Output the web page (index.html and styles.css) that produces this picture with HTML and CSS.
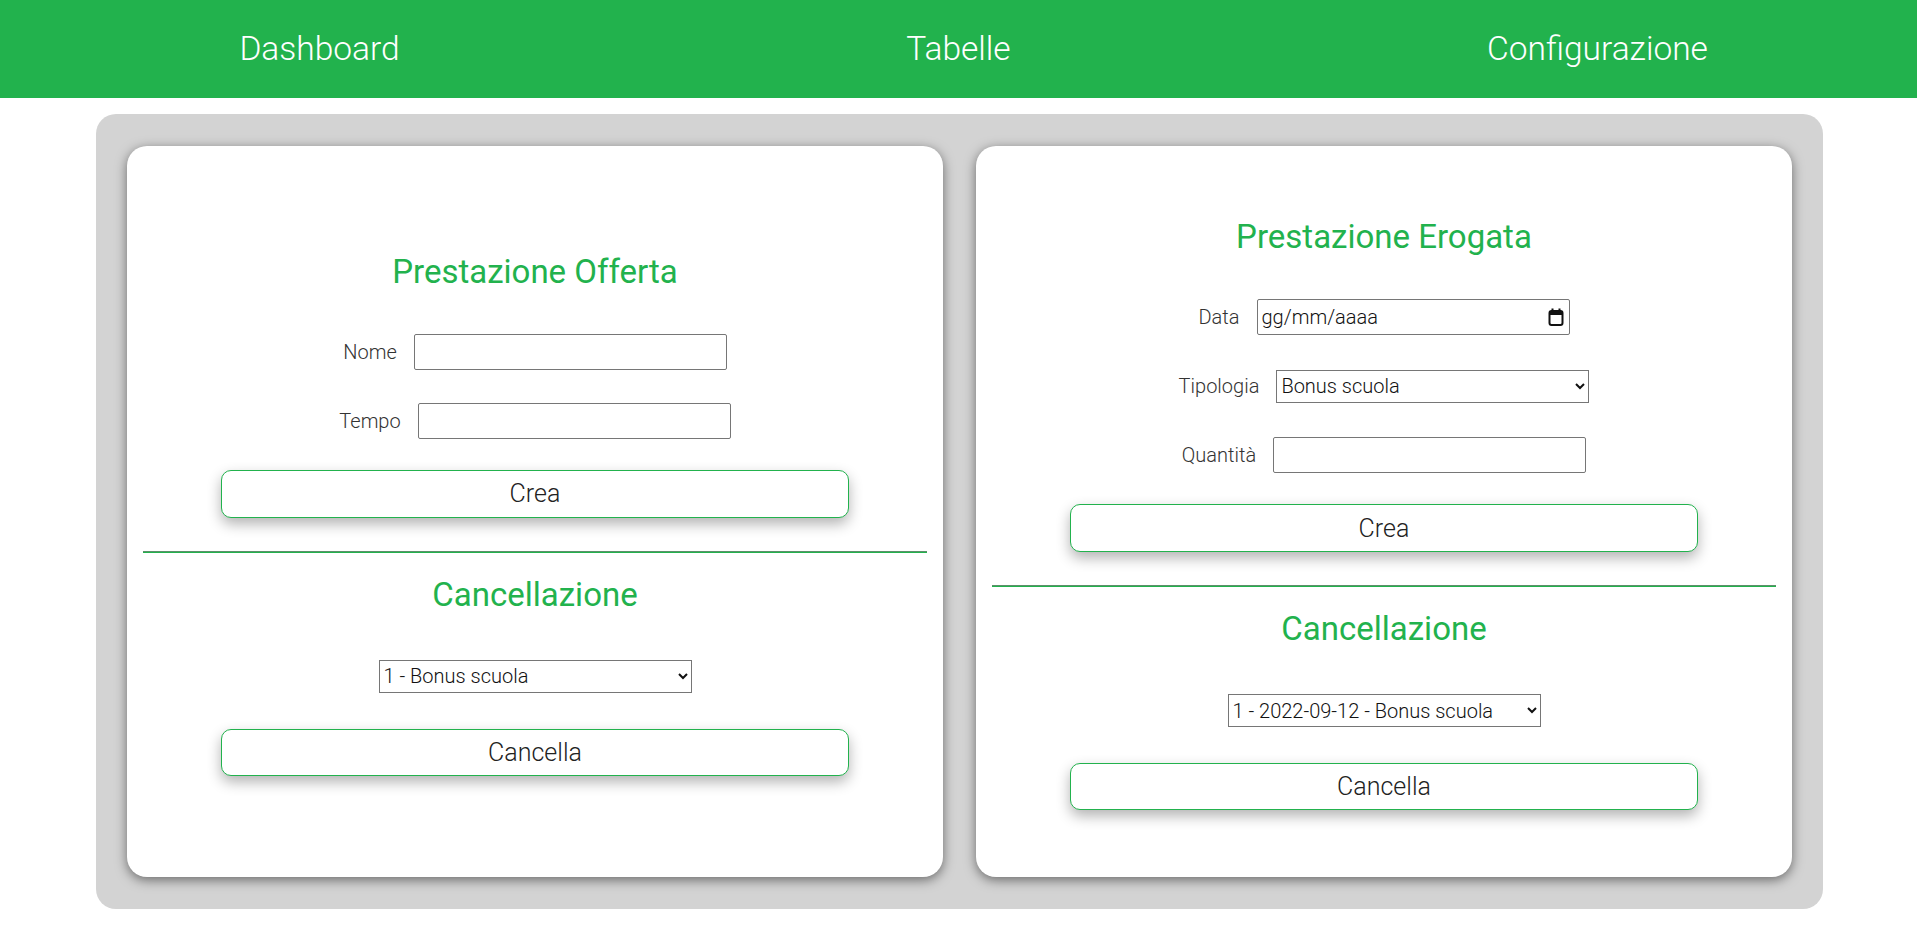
FILE: index.html
```html
<!DOCTYPE html>
<html lang="it">
<head>
<meta charset="utf-8">
<title>Prestazioni</title>
<link rel="stylesheet" href="styles.css">
</head>
<body>
<header class="topbar">
  <nav class="nav">
    <a class="nav-link" href="#">Dashboard</a>
    <a class="nav-link" href="#">Tabelle</a>
    <a class="nav-link" href="#">Configurazione</a>
  </nav>
</header>
<main class="panel">
  <section class="card">
    <div class="card-body">
      <h2 class="card-title">Prestazione Offerta</h2>
      <div class="field first-field">
        <label class="field-label">Nome</label>
        <input class="field-input" type="text">
      </div>
      <div class="field">
        <label class="field-label">Tempo</label>
        <input class="field-input" type="text">
      </div>
      <button class="btn">Crea</button>
      <hr class="divider">
      <h2 class="card-title">Cancellazione</h2>
      <select class="field-select delete-select"><option>1 - Bonus scuola</option></select>
      <button class="btn btn-delete">Cancella</button>
    </div>
  </section>
  <section class="card">
    <div class="card-body">
      <h2 class="card-title">Prestazione Erogata</h2>
      <div class="field first-field">
        <label class="field-label">Data</label>
        <div class="field-input date-input">
          <span class="date-text">gg/mm/aaaa</span>
          <svg class="cal-icon" width="16" height="18" viewBox="0 0 16 18" aria-hidden="true">
            <path d="M4.5 0.5v3M11.5 0.5v3" stroke="#111" stroke-width="2" fill="none"/>
            <rect x="1.5" y="3" width="13" height="14" rx="2" fill="none" stroke="#111" stroke-width="2"/>
            <rect x="1.5" y="3" width="13" height="4" fill="#111"/>
          </svg>
        </div>
      </div>
      <div class="field">
        <label class="field-label">Tipologia</label>
        <select class="field-select"><option>Bonus scuola</option></select>
      </div>
      <div class="field">
        <label class="field-label">Quantità</label>
        <input class="field-input" type="text">
      </div>
      <button class="btn">Crea</button>
      <hr class="divider">
      <h2 class="card-title">Cancellazione</h2>
      <select class="field-select delete-select"><option>1 - 2022-09-12 - Bonus scuola</option></select>
      <button class="btn btn-delete">Cancella</button>
    </div>
  </section>
</main>
</body>
</html>
```
FILE: styles.css
```css
html, body {
  margin: 0;
  padding: 0;
  background: #ffffff;
  font-family: Roboto, "Liberation Sans", sans-serif;
}

.topbar {
  background: #22b24d;
  height: 98px;
}

.nav {
  display: grid;
  grid-template-columns: 1fr 1fr 1fr;
  height: 100%;
  align-items: center;
}

.nav-link {
  justify-self: center;
  color: #ffffff;
  text-decoration: none;
  font-size: 33.5px;
  font-weight: 300;
  line-height: 38px;
}

.panel {
  box-sizing: border-box;
  margin: 16px 94px 0 96px;
  background: #d3d3d3;
  border-radius: 20px;
  padding: 32px 31px;
  display: grid;
  grid-template-columns: 1fr 1fr;
  gap: 33px;
}

.card {
  background: #ffffff;
  border-radius: 20px;
  box-shadow: 0 3px 12px rgba(0, 0, 0, 0.5);
  padding: 71px 16px 67px;
  display: flex;
  flex-direction: column;
  justify-content: center;
}

.card-body {
  display: flex;
  flex-direction: column;
  align-items: center;
}

.card-title {
  margin: 0;
  font-size: 33px;
  font-weight: 400;
  line-height: 40px;
  color: #22b24d;
}

.field {
  display: flex;
  align-items: center;
  gap: 17px;
  height: 36px;
  margin-top: 33px;
}

.first-field {
  margin-top: 42px;
}

.field-label {
  font-size: 20px;
  font-weight: 300;
  color: #333333;
}

.field-input {
  box-sizing: border-box;
  width: 313px;
  height: 36px;
  border: 1px solid #767676;
  border-radius: 2px;
  padding: 0 4px;
  margin: 0;
  font-family: inherit;
  font-size: 20px;
  background: #ffffff;
}

.date-input {
  display: flex;
  align-items: center;
  justify-content: space-between;
  color: #111111;
  font-weight: 300;
}

.cal-icon {
  display: block;
  margin-right: 1px;
}

.field-select {
  box-sizing: border-box;
  width: 313px;
  height: 33px;
  margin: 0;
  border: 1px solid #767676;
  font-family: inherit;
  font-size: 20px;
  font-weight: 300;
  color: #111111;
  background: #ffffff;
}

.delete-select {
  margin-top: 45px;
}

.btn {
  box-sizing: border-box;
  width: 80%;
  height: 48px;
  margin-top: 31px;
  background: #ffffff;
  border: 1px solid #22b24d;
  border-radius: 10px;
  box-shadow: 0 6px 14px rgba(0, 0, 0, 0.3);
  font-family: inherit;
  font-size: 25px;
  font-weight: 300;
  color: #222222;
  cursor: pointer;
}

.btn-delete {
  margin-top: 36px;
  height: 47px;
}

.divider {
  align-self: stretch;
  height: 0;
  border: 0;
  border-top: 1px solid #5e8f6b;
  border-bottom: 1px solid #22b24d;
  margin: 33px 0 22px;
}
```
